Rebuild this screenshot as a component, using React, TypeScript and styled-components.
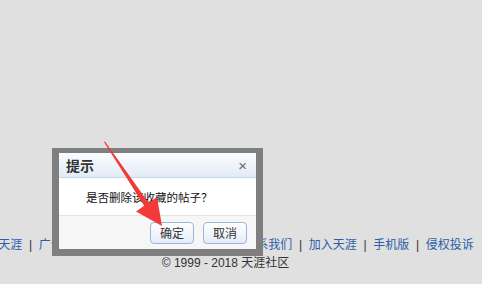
import React from 'react';
import styled, { createGlobalStyle } from 'styled-components';

const GlobalStyle = createGlobalStyle`
  html, body {
    margin: 0;
    padding: 0;
    background: #e0e0e0;
  }
  body {
    font-family: "Liberation Sans", "Noto Sans CJK SC", sans-serif;
  }
`;

const Page = styled.div`
  position: relative;
  width: 482px;
  height: 284px;
  overflow: hidden;
  display: flex;
  flex-direction: column;
  justify-content: flex-end;
  padding-bottom: 12px;
  box-sizing: border-box;
`;

const Footer = styled.div`
  width: 448px;
  display: flex;
  flex-direction: column;
  align-items: center;
  font-size: 12px;
  line-height: 18px;
`;

const LinkRow = styled.div`
  display: flex;
  justify-content: center;
  white-space: nowrap;
  width: 100%;
`;

const FooterLink = styled.a`
  color: #2b5ea8;
  text-decoration: none;
`;

const Pipe = styled.span`
  color: #333;
  margin: 0 6.7px;
`;

const Copyright = styled.div`
  color: #333;
  white-space: nowrap;
  margin-left: 3px;
`;

const Dialog = styled.div`
  position: absolute;
  left: 52px;
  top: 148px;
  width: 211px;
  height: 108px;
  box-sizing: border-box;
  border: 7px solid #7f7f7f;
  border-top-width: 5px;
  background: #fff;
  display: flex;
  flex-direction: column;
`;

const TitleBar = styled.div`
  height: 25px;
  box-sizing: border-box;
  display: flex;
  align-items: center;
  justify-content: space-between;
  padding: 0 9px 0 7px;
  background: linear-gradient(#fbfdff, #e2ebf7);
  border-bottom: 1px solid #c6d7ee;
`;

const Title = styled.span`
  font-size: 14px;
  font-weight: bold;
  color: #333;
`;

const Close = styled.span`
  font-size: 15px;
  color: #666;
  line-height: 1;
`;

const Body = styled.div`
  height: 37px;
  display: flex;
  align-items: center;
  padding-left: 27px;
  font-size: 11.5px;
  color: #111;
`;

const ButtonBar = styled.div`
  flex: 1;
  display: flex;
  justify-content: flex-end;
  align-items: center;
  gap: 9px;
  padding-right: 9px;
  background: #f6f6f6;
  border-top: 1px solid #e4e4e4;
`;

const Button = styled.button`
  width: 44px;
  height: 22px;
  padding: 0;
  border: 1px solid #9cb5d8;
  border-radius: 4px;
  background: linear-gradient(#ffffff, #e4ecf8);
  color: #333;
  font-family: "Liberation Sans", "Noto Sans CJK SC", sans-serif;
  font-size: 12px;
`;

const ArrowLayer = styled.svg`
  position: absolute;
  left: 0;
  top: 0;
  pointer-events: none;
`;

const links = ['关于天涯', '广告服务', '天涯客服', '隐私和版权', '联系我们', '加入天涯', '手机版', '侵权投诉'];

export default function App() {
  return (
    <>
      <GlobalStyle />
      <Page>
        <Footer>
          <LinkRow>
            {links.map((l, i) => (
              <React.Fragment key={l}>
                {i > 0 && <Pipe>|</Pipe>}
                <FooterLink href="#">{l}</FooterLink>
              </React.Fragment>
            ))}
          </LinkRow>
          <Copyright>© 1999 - 2018 天涯社区</Copyright>
        </Footer>
        <Dialog>
          <TitleBar>
            <Title>提示</Title>
            <Close>×</Close>
          </TitleBar>
          <Body>是否删除该收藏的帖子？</Body>
          <ButtonBar>
            <Button>确定</Button>
            <Button>取消</Button>
          </ButtonBar>
        </Dialog>
        <ArrowLayer width="482" height="284" viewBox="0 0 482 284">
          <polygon
            points="104,142 105,141.5 148.6,202.8 157,197 162,226 136,211.5 144.2,205.8"
            fill="#f23a3a"
          />
        </ArrowLayer>
      </Page>
    </>
  );
}
